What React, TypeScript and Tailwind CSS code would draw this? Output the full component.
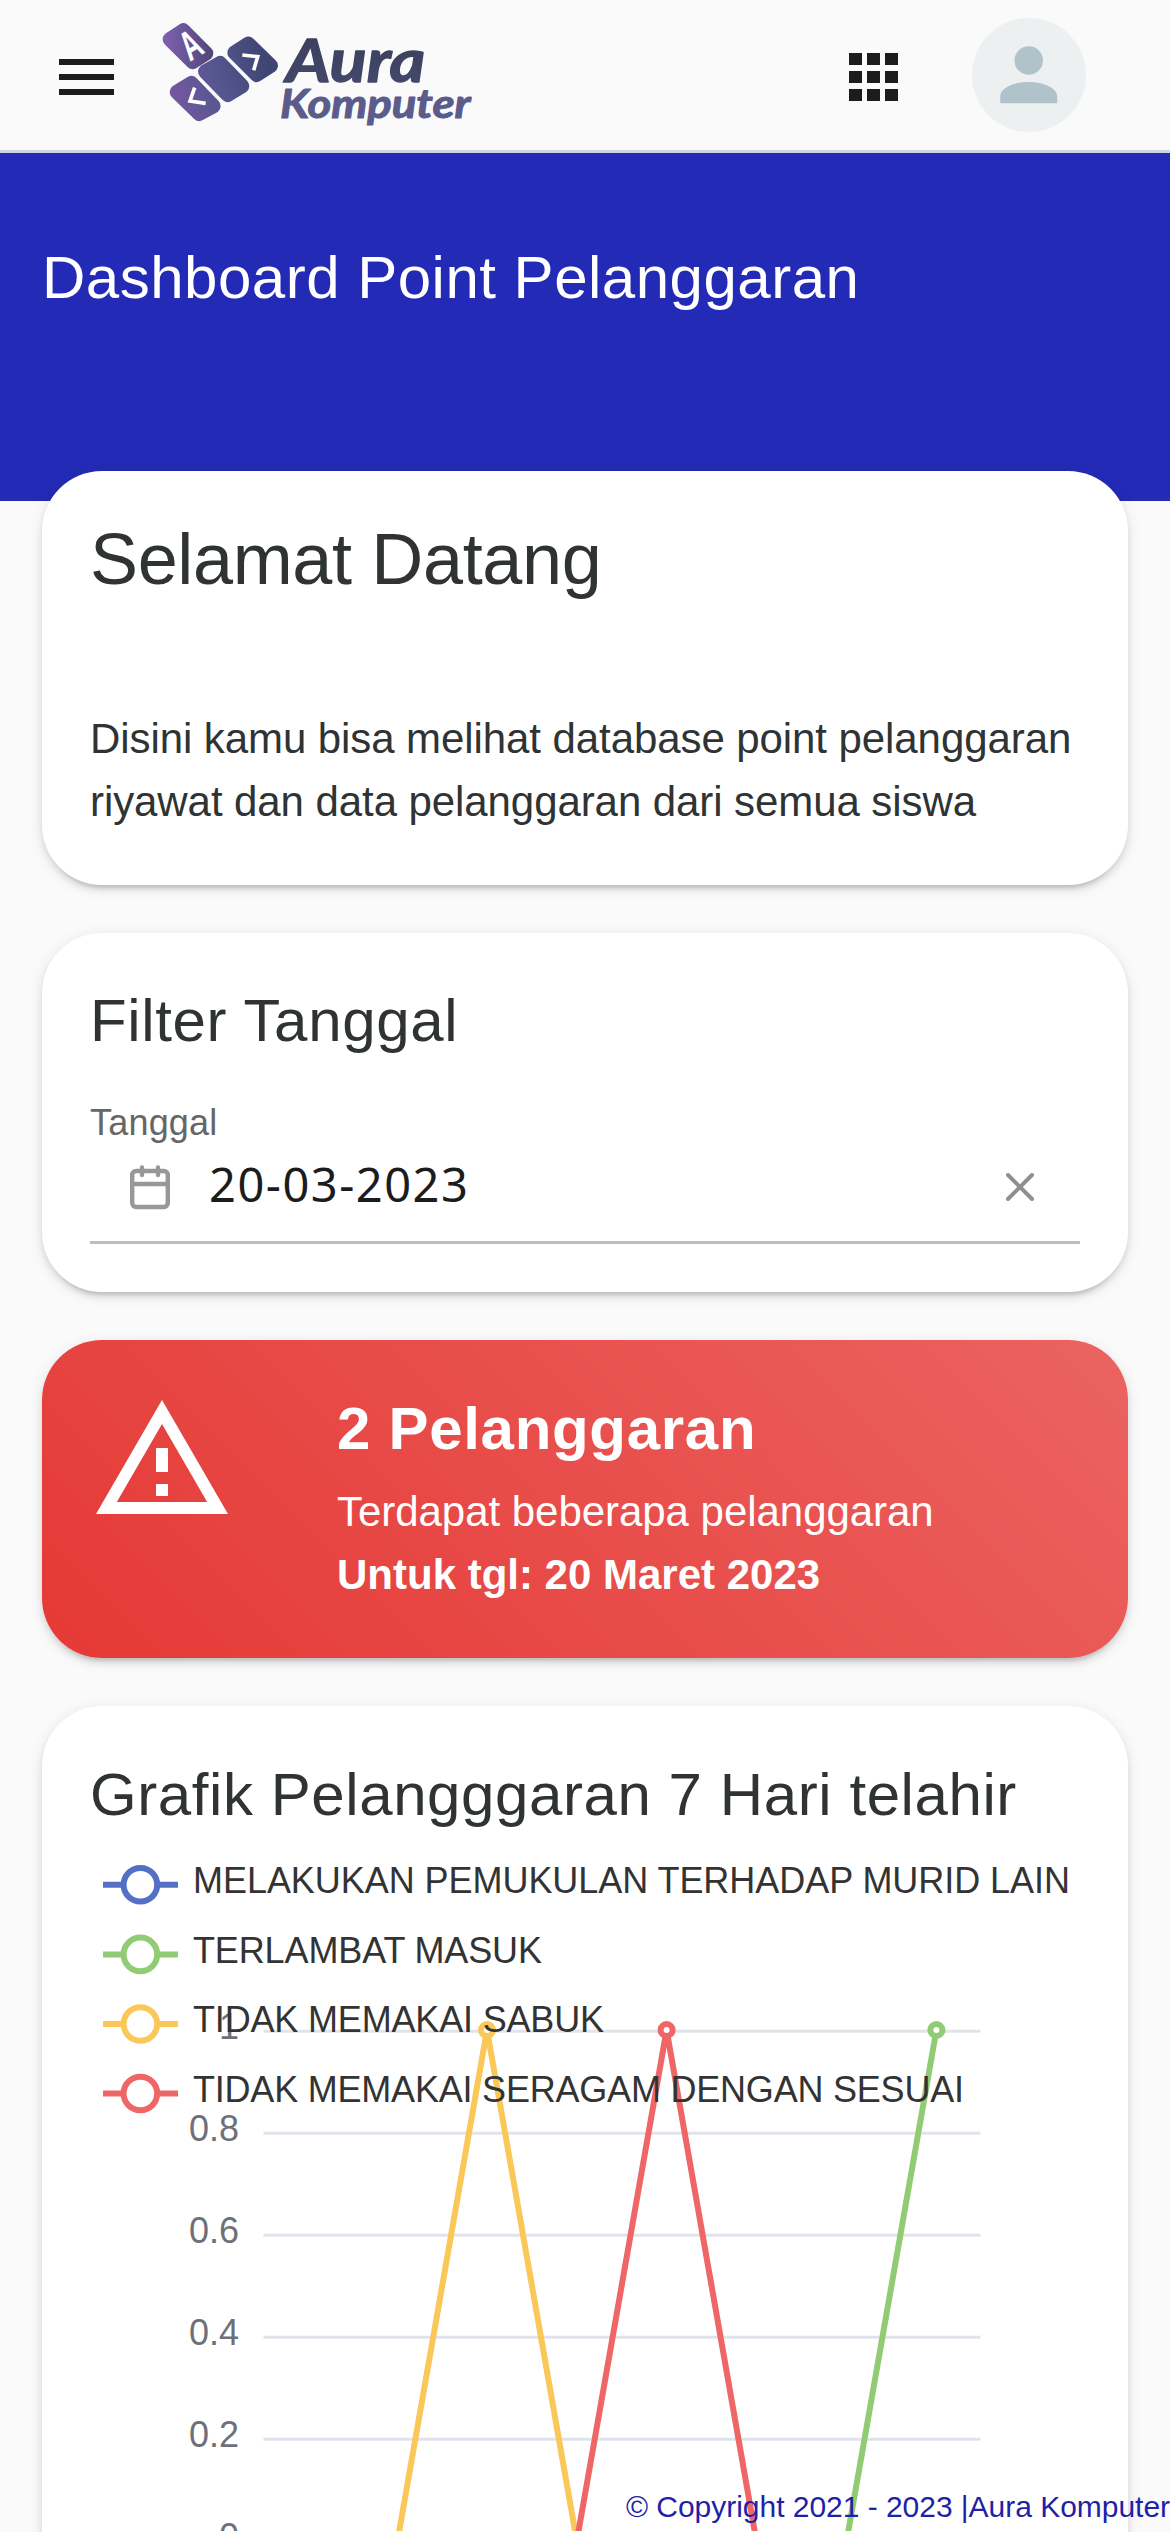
const tiles = [
  'M550 92 L618 160 L578 185 L510 118 Z',
  'M745 132 L812 197 L770 224 L704 158 Z',
  'M660 190 L726 258 L683 284 L616 215 Z',
  'M574 250 L640 318 L598 341 L531 276 Z',
];

function Logo() {
  return (
    <svg className="ml-[46px] h-[110px] w-[312px] shrink-0" viewBox="480 60 936 330" role="img" aria-label="Aura Komputer">
      <defs>
        <linearGradient id="tile" gradientUnits="userSpaceOnUse" x1="500" y1="240" x2="800" y2="160">
          <stop offset="0" stopColor="#75579f" />
          <stop offset="0.45" stopColor="#565790" />
          <stop offset="1" stopColor="#3e4570" />
        </linearGradient>
        <linearGradient id="tileA" gradientUnits="userSpaceOnUse" x1="495" y1="130" x2="635" y2="130">
          <stop offset="0" stopColor="#7e5fae" />
          <stop offset="1" stopColor="#4f477c" />
        </linearGradient>
        <linearGradient id="word" x1="0" y1="0" x2="0" y2="1">
          <stop offset="0" stopColor="#3a3d58" />
          <stop offset="1" stopColor="#454a6e" />
        </linearGradient>
      </defs>
      {tiles.map((d, i) => (
        <path key={d} d={d} fill={i === 0 ? 'url(#tileA)' : 'url(#tile)'} stroke={i === 0 ? 'url(#tileA)' : 'url(#tile)'} strokeWidth="44" strokeLinejoin="round" />
      ))}
      <text transform="translate(594 171) rotate(-31) scale(0.62 1)" textAnchor="middle" fontSize="124" fontFamily="Liberation Sans, sans-serif" fontWeight="700" fill="#fff">A</text>
      <path d="M727 165 L773 170 L761 211 M584 263 L570 303 L617 310" fill="none" stroke="#fff" strokeWidth="11" />
      <text x="858" y="247" fontSize="180" fontFamily="Lato, sans-serif" fontWeight="700" fontStyle="italic" fill="url(#word)" stroke="url(#word)" strokeWidth="4" strokeLinejoin="round" textLength="418" lengthAdjust="spacingAndGlyphs">Aura</text>
      <text x="840" y="353" fontSize="122" fontFamily="Lato, sans-serif" fontWeight="700" fontStyle="italic" fill="#5b5b8c" stroke="#5b5b8c" strokeWidth="3" strokeLinejoin="round" textLength="572" lengthAdjust="spacingAndGlyphs">Komputer</text>
    </svg>
  );
}

const legend = [
  { label: 'MELAKUKAN PEMUKULAN TERHADAP MURID LAIN', color: '#5470c6', y: 1885.7, w: 877 },
  { label: 'TERLAMBAT MASUK', color: '#91cc75', y: 1955.4, w: 349 },
  { label: 'TIDAK MEMAKAI SABUK', color: '#fac858', y: 2025, w: 411 },
  { label: 'TIDAK MEMAKAI SERAGAM DENGAN SESUAI', color: '#ee6666', y: 2094.5, w: 771 },
];

const ticks = [
  { label: '1', y: 2032.3 },
  { label: '0.8', y: 2134.3 },
  { label: '0.6', y: 2236.3 },
  { label: '0.4', y: 2338.3 },
  { label: '0.2', y: 2440.3 },
  { label: '0', y: 2542.3 },
];

const series = [
  { color: '#91cc75', points: '308,2542 846.6,2542 936.4,2031', x: 936.4 },
  { color: '#fac858', points: '308,2542 397.5,2542 487,2031 576.8,2542 936.4,2542', x: 487 },
  { color: '#ee6666', points: '308,2542 576.8,2542 666.6,2031 756.4,2542 936.4,2542', x: 666.6 },
];

function Chart() {
  return (
    <svg className="-mx-12 block h-[688px] w-[1086px]" viewBox="42 1844 1086 688" fontFamily="Liberation Sans, Arial, sans-serif" fontSize="36">
      {ticks.map((t) => (
        <g key={t.label}>
          <path d={`M263.5 ${t.y} H980.5`} stroke="#e0e4ea" strokeWidth="3" />
          <text x="239" y={t.y + 7.5} textAnchor="end" fill="#6e7079">{t.label}</text>
        </g>
      ))}
      {series.map((s) => (
        <polyline key={s.color} points={s.points} fill="none" stroke={s.color} strokeWidth="6" strokeLinejoin="bevel" />
      ))}
      {series.map((s) => (
        <circle key={s.color} cx={s.x} cy="2031" r="6" fill="#fff" stroke={s.color} strokeWidth="6" />
      ))}
      {legend.map((l) => (
        <g key={l.label}>
          <path d={`M103 ${l.y} H178`} stroke={l.color} strokeWidth="6" />
          <circle cx="140.4" cy={l.y} r="16.8" fill="#fff" stroke={l.color} strokeWidth="6" />
          <text x="193" y={l.y + 8.3} fill="#333" textLength={l.w}>{l.label}</text>
        </g>
      ))}
    </svg>
  );
}

const card =
  'rounded-[60px] px-12 shadow-[0_9px_3px_-6px_rgba(0,0,0,0.1),0_5px_6px_0_rgba(0,0,0,0.09),0_3px_15px_0_rgba(0,0,0,0.09)]';

export default function App() {
  return (
    <div className="relative h-[2532px] w-[1170px] overflow-hidden bg-[#fafafa] font-['Liberation_Sans',Arial,sans-serif] text-[#2f3333]">
      <header className="flex h-[153px] items-start border-b-[3px] border-[#ccd5e3] bg-[#fafafa]">
        <button className="mt-[59px] ml-[59px] flex w-[55px] flex-col gap-[9px]" aria-label="Menu">
          <span className="h-[6px] w-full bg-[#1c1c1c]" />
          <span className="h-[6px] w-full bg-[#1c1c1c]" />
          <span className="h-[6px] w-full bg-[#1c1c1c]" />
        </button>
        <div className="mt-5 flex">
          <Logo />
        </div>
        <div className="mt-[53px] mr-[74px] ml-auto grid grid-cols-3 gap-x-[5.5px] gap-y-[6px]">
          {Array.from({ length: 9 }, (_, i) => (
            <span key={i} className="h-[12px] w-[12.6px] bg-[#1c1c1c]" />
          ))}
        </div>
        <div className="mt-[17.5px] mr-[84px] flex size-[114px] items-center justify-center rounded-full bg-[#ecf0f1]">
          <svg className="size-[85.5px]" viewBox="0 0 24 24" fill="#b0c2ca">
            <path d="M12,4A4,4 0 0,1 16,8A4,4 0 0,1 12,12A4,4 0 0,1 8,8A4,4 0 0,1 12,4M12,14C16.42,14 20,15.79 20,18V20H4V18C4,15.79 7.58,14 12,14Z" />
          </svg>
        </div>
      </header>

      <section className="h-[348px] bg-[#232bb6] px-[42px] pt-[77px]">
        <h1 className="text-[60px] leading-[96px] tracking-[0.5px] whitespace-nowrap text-white">Dashboard Point Pelanggaran</h1>
      </section>

      <main className="relative -mt-[30px] flex flex-col gap-12 px-[42px]">
        <section className={`${card} h-[414px] bg-white pt-10`}>
          <h2 className="text-[72px] leading-[96px] tracking-[-0.35px]">Selamat Datang</h2>
          <p className="mt-[100px] text-[42px] leading-[63px] tracking-[-0.08px] whitespace-nowrap">
            Disini kamu bisa melihat database point pelanggaran
            <br />
            riyawat dan data pelanggaran dari semua siswa
          </p>
        </section>

        <section className={`${card} h-[359px] bg-white pt-10`}>
          <h3 className="text-[60px] leading-[96px] tracking-[0.65px]">Filter Tanggal</h3>
          <label className="mt-[30px] block text-[36px] leading-[48px] tracking-[0.2px] text-[#666]">Tanggal</label>
          <div className="flex h-[97px] items-start border-b-[3px] border-[#bdbdbd]">
            <svg className="mt-[17px] ml-[39px] h-[46px] w-[42px] shrink-0" viewBox="0 0 42 46" fill="none" stroke="#989898" strokeWidth="4.4" strokeLinecap="round">
              <rect x="3.2" y="7" width="35.6" height="36" rx="4" />
              <path d="M3.2 20H38.8M13 3.5V11M29 3.5V11" />
            </svg>
            <span className="mt-px ml-[38px] font-['Noto_Sans',sans-serif] text-[47px] leading-[72px] tracking-[1.5px] text-[#1c1c1c]">20-03-2023</span>
            <svg className="mt-[25px] mr-[45px] ml-auto size-[30px]" viewBox="0 0 30 30" stroke="#8f8f8f" strokeWidth="4" strokeLinecap="round">
              <path d="M3 3L27 27M27 3L3 27" />
            </svg>
          </div>
        </section>

        <section className={`${card} flex h-[318px] bg-linear-[45deg] from-[#e53935] to-[#eb6361] text-white`}>
          <svg className="mt-12 size-[144px] shrink-0" viewBox="0 0 24 24" fill="#fff">
            <path d="M12,2L1,21H23M12,6L19.53,19H4.47M11,10V14H13V10M11,16V18H13V16" />
          </svg>
          <div className="ml-[103px] pt-[41px] whitespace-nowrap">
            <h3 className="text-[60px] leading-[96px] font-bold tracking-[0.7px]">2 Pelanggaran</h3>
            <p className="mt-[3px] text-[42px] leading-[63px] tracking-[-0.04px]">Terdapat beberapa pelanggaran</p>
            <p className="text-[42px] leading-[63px] font-bold">Untuk tgl: 20 Maret 2023</p>
          </div>
        </section>

        <section className={`${card} h-[1100px] bg-white pt-[41px]`}>
          <h3 className="text-[60px] leading-[96px] tracking-[0.58px] whitespace-nowrap">Grafik Pelangggaran 7 Hari telahir</h3>
          <Chart />
        </section>
      </main>

      <footer className="absolute right-0 bottom-[7px] text-[30px] leading-[36px] tracking-[-0.03px] whitespace-nowrap text-[#1f1fa8]">
        © Copyright 2021 - 2023 |Aura Komputer
      </footer>
    </div>
  );
}
